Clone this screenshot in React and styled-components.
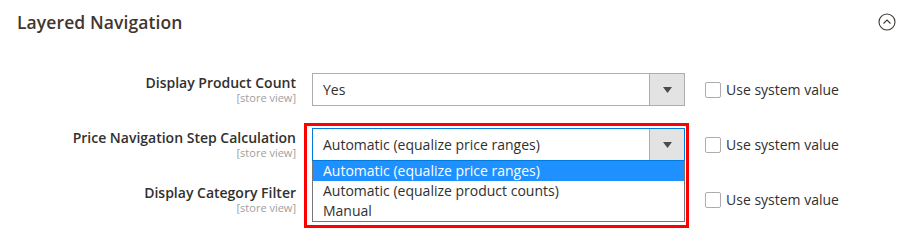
import React from 'react';
import styled, { createGlobalStyle } from 'styled-components';

const GlobalStyle = createGlobalStyle`
  body {
    margin: 0;
    background: #fff;
    font-family: 'Open Sans', 'Liberation Sans', sans-serif;
    color: #303030;
  }
`;

const rows = [
  { label: 'Display Product Count', value: 'Yes' },
  { label: 'Price Navigation Step Calculation', value: 'Automatic (equalize price ranges)', open: true },
  { label: 'Display Category Filter', value: 'Yes' },
];

const options = [
  'Automatic (equalize price ranges)',
  'Automatic (equalize product counts)',
  'Manual',
];

const App = () => {
  return (
    <Wrapper>
      <GlobalStyle />
      <Header>
        <Title>Layered Navigation</Title>
        <svg width="18" height="18" viewBox="0 0 18 18">
          <circle cx="9" cy="9" r="8" fill="none" stroke="#41362f" strokeWidth="1.1" />
          <path d="M5.5 10.5 L9 7 L12.5 10.5" fill="none" stroke="#41362f" strokeWidth="1.1" />
        </svg>
      </Header>
      <Form>
        {rows.map((row) => (
          <Row key={row.label}>
            <Label>
              <span>{row.label}</span>
              <Scope>[store view]</Scope>
            </Label>
            <Control>
              <Select $focused={row.open}>
                <SelectText>{row.value}</SelectText>
                <Arrow>
                  <svg width="9" height="6" viewBox="0 0 9 6">
                    <path d="M0 0 H9 L4.5 6 Z" fill="#514943" />
                  </svg>
                </Arrow>
              </Select>
              {row.open && (
                <>
                  <OptionList>
                    {options.map((opt, i) => (
                      <Option key={opt} $active={i === 0}>
                        {opt}
                      </Option>
                    ))}
                  </OptionList>
                  <Highlight />
                </>
              )}
            </Control>
            <SystemValue>
              <Checkbox />
              <span>Use system value</span>
            </SystemValue>
          </Row>
        ))}
      </Form>
    </Wrapper>
  );
};

export default App;

const Wrapper = styled.div`
  width: 915px;
  height: 235px;
  overflow: hidden;
`;

const Header = styled.div`
  display: flex;
  align-items: center;
  justify-content: space-between;
  height: 44px;
  padding: 0 19px 0 17px;
  svg {
    display: block;
  }
`;

const Title = styled.h2`
  margin: 0;
  font-size: 17.5px;
  font-weight: 600;
  color: #41362f;
  letter-spacing: 0.1px;
`;

const Form = styled.div`
  display: flex;
  flex-direction: column;
  gap: 22px;
  padding-top: 29px;
`;

const Row = styled.div`
  display: grid;
  grid-template-columns: 296px 389px auto;
  align-items: start;
`;

const Label = styled.div`
  display: flex;
  flex-direction: column;
  align-items: flex-end;
  font-size: 14px;
  font-weight: 600;
  line-height: 19px;
  color: #303030;
`;

const Scope = styled.span`
  font-size: 11px;
  font-weight: 400;
  line-height: 11px;
  color: #a0a0a0;
`;

const Control = styled.div`
  position: relative;
  margin-left: 16px;
  width: 373px;
`;

const Select = styled.div`
  display: flex;
  height: 33px;
  box-sizing: border-box;
  border: 1px solid ${(p) => (p.$focused ? '#007bdb' : '#adadad')};
  background: #fff;
`;

const SelectText = styled.div`
  flex: 1;
  padding-left: 10px;
  font-size: 14px;
  line-height: 31px;
  color: #303030;
`;

const Arrow = styled.div`
  width: 34px;
  display: flex;
  align-items: center;
  justify-content: center;
  background: #e3e3e3;
  border-left: 1px solid #adadad;
`;

const OptionList = styled.div`
  position: absolute;
  top: 33px;
  left: 0;
  right: 0;
  box-sizing: border-box;
  background: #fff;
  border: 1px solid #767676;
  border-top: none;
  z-index: 2;
`;

const Option = styled.div`
  height: 20px;
  padding-left: 10px;
  font-size: 14px;
  line-height: 20px;
  color: ${(p) => (p.$active ? '#fff' : '#303030')};
  background: ${(p) => (p.$active ? '#1e90ff' : 'transparent')};
`;

const Highlight = styled.div`
  position: absolute;
  left: -8px;
  top: -5px;
  width: 385px;
  height: 105px;
  box-sizing: border-box;
  border: 3px solid #ff0000;
  z-index: 3;
  pointer-events: none;
`;

const SystemValue = styled.label`
  display: flex;
  align-items: center;
  gap: 5px;
  margin-left: 20px;
  height: 33px;
  font-size: 14px;
  color: #303030;
`;

const Checkbox = styled.span`
  display: inline-block;
  width: 14px;
  height: 14px;
  border: 1px solid #adadad;
  border-radius: 2px;
  background: #fff;
`;
